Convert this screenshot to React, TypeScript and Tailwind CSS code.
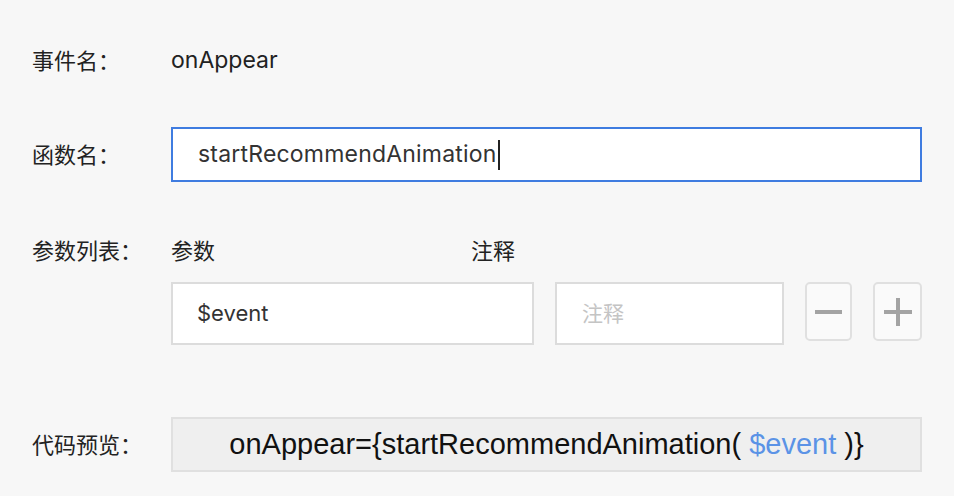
const cjk = 'font-["Noto_Sans","Noto_Sans_CJK_SC",sans-serif]';
const latin = 'font-["Inter","Noto_Sans_CJK_SC",sans-serif]';

function Label({ children }: { children: string }) {
  return (
    <div className={`w-[139px] shrink-0 text-[22px] text-[#222] ${cjk}`}>{children}</div>
  );
}

export default function App() {
  return (
    <div className={`h-[496px] w-full bg-[#f7f7f7] pl-[32px] pt-[32px] ${cjk}`}>
      <div className="flex h-[56px] items-center">
        <Label>事件名：</Label>
        <div className={`text-[23px] text-[#222] ${latin}`}>onAppear</div>
      </div>

      <div className="mt-[39px] flex h-[55px] items-center">
        <Label>函数名：</Label>
        <div className={`flex h-[55px] w-[751px] items-center border-2 border-[#3f7ce0] bg-white pl-[25px] text-[23px] tracking-[0.2px] text-[#333] ${latin}`}>
          startRecommendAnimation
          <span className="ml-px h-[30px] w-[2px] bg-[#222]" />
        </div>
      </div>

      <div className="mt-[55px] flex h-[26px] items-center">
        <Label>参数列表：</Label>
        <div className="w-[300px] text-[22px] text-[#222]">参数</div>
        <div className="text-[22px] text-[#222]">注释</div>
      </div>

      <div className="mt-[19px] flex h-[63px] items-start">
        <div className="w-[139px] shrink-0" />
        <div className={`flex h-[63px] w-[363px] items-center border-2 border-[#dcdcdc] bg-white pl-[24px] text-[22px] text-[#333] ${latin}`}>
          $event
        </div>
        <div className="ml-[21px] flex h-[63px] w-[229px] items-center border-2 border-[#dcdcdc] bg-white pl-[25px] text-[21px] text-[#c4c4c4]">
          注释
        </div>
        <button className="ml-[21px] flex h-[59px] w-[47px] items-center justify-center rounded-[5px] border-2 border-[#e0e0e0] bg-[#fafafa]">
          <span className="h-[4px] w-[27px] bg-[#a3a3a3]" />
        </button>
        <button className="ml-[21px] flex h-[59px] w-[49px] items-center justify-center rounded-[5px] border-2 border-[#e0e0e0] bg-[#fafafa]">
          <svg width="28" height="28" viewBox="0 0 28 28">
            <rect x="0" y="12" width="28" height="4" fill="#a3a3a3" />
            <rect x="12" y="0" width="4" height="28" fill="#a3a3a3" />
          </svg>
        </button>
      </div>

      <div className="mt-[72px] flex h-[54px] items-center">
        <Label>代码预览：</Label>
        <div className='flex h-[55px] w-[751px] items-center justify-center border-2 border-[#e0e0e0] bg-[#efefef] pt-[2px] font-["Liberation_Sans",sans-serif] text-[29px] text-[#111]'>
          <span className="whitespace-pre">
            onAppear={'{'}startRecommendAnimation( <span className="text-[#5b93e6]">$event</span> ){'}'}
          </span>
        </div>
      </div>
    </div>
  );
}
